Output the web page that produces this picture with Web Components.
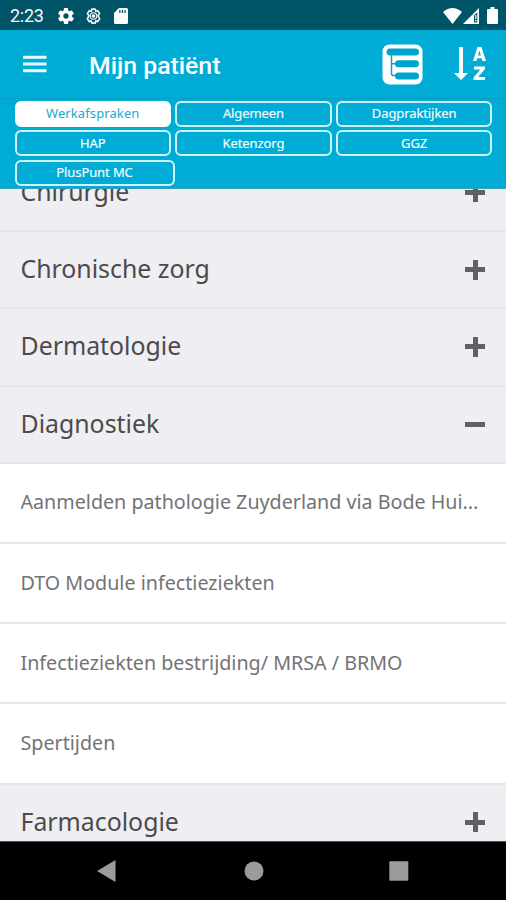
<!DOCTYPE html>
<html lang="nl">
<head>
<meta charset="utf-8">
<title>Mijn patiënt</title>
<style>
html, body { margin: 0; height: 100%; overflow: hidden; }
</style>
</head>
<body>
<patient-app></patient-app>
<script>
function define(name, markup) {
  const template = document.createElement('template');
  template.innerHTML = markup;
  customElements.define(name, class extends HTMLElement {
    constructor() {
      super();
      this.attachShadow({ mode: 'open' }).append(template.content.cloneNode(true));
    }
  });
}

define('status-bar', `
<style>
:host { display: flex; align-items: center; justify-content: space-between; height: 30px; box-sizing: border-box; padding: 1px 7px 0 10px; background: #005468; color: #f4fafb; font: 18px/28px Roboto, sans-serif; }
div { display: flex; align-items: center; }
svg { display: block; fill: #fff; }
.time { width: 48px; letter-spacing: -.3px; padding-top: 1px; }
</style>
<div>
  <span class="time">2:23</span>
  <svg width="16" height="16" viewBox="2 2 20 20"><path fill-rule="evenodd" d="M19.4 13c.1-.7.1-1.300 0-2l2.100-1.600c.2-.2.200-.4.1-.7l-2-3.400c-.1-.2-.4-.3-.6-.2l-2.500 1c-.5-.4-1.100-.7-1.700-1l-.4-2.600A.5.5 0 0 0 14 2h-4c-.3 0-.5.2-.5.400l-.4 2.700c-.6.2-1.200.6-1.700 1l-2.500-1c-.2-.1-.5 0-.6.200l-2 3.400c-.1.200-.1.500.1.700L4.500 11a9 9 0 0 0 0 2l-2.100 1.600c-.2.200-.2.400-.1.700l2 3.400c.1.200.4.300.6.200l2.500-1c.5.400 1.100.7 1.700 1l.4 2.700c0 .200.2.4.5.4h4c.3 0 .5-.2.500-.4l.4-2.700c.6-.2 1.200-.6 1.700-1l2.500 1c.2.1.5 0 .6-.2l2-3.400c.1-.2.1-.5-.1-.7zM12 15.300a3.300 3.300 0 1 1 0-6.600 3.300 3.300 0 0 1 0 6.600z"/></svg>
  <svg style="margin-left:11px" width="17" height="16" viewBox="1 1 22 22"><path fill="none" stroke="#e9f7f9" stroke-width="2.300" stroke-linejoin="round" d="M9.700 2.500h4.600l.8 3 2.800-.8 2.500 4-2.200 3 2.200 4-2.500 4-2.800-1-.8 3H9.700l-.8-3-2.800 1-2.500-4 2.200-4-2.200-3 2.500-4 2.800 1z"/><circle cx="12" cy="12" r="4.500" fill="none" stroke="#fff" stroke-width="1.500"/><circle cx="12" cy="12" r="2.500"/></svg>
  <svg style="margin-left:12px" width="14" height="16" viewBox="0 0 14 16"><path fill-rule="evenodd" d="M5 0h7.500Q14 0 14 1.500v13Q14 16 12.500 16h-11Q0 16 0 14.500V5zM5.200 2v3h1.300V2zm2.600 0v3h1.300V2zm2.600 0v3h1.300V2z"/></svg>
</div>
<div>
  <svg width="19" height="16" viewBox="0 0 19 16"><path d="M0 4Q9.500-4 19 4L9.500 16z"/></svg>
  <svg style="margin-left:1px" width="16" height="16" viewBox="0 0 16 16"><path d="M0 16L16 0v16z"/><path fill="#005468" d="M11 7.500l3.300-3.300v10.300H11z"/><path d="M12.200 7h1.200v4h-1.200zM12.200 12h1.200v1.500h-1.200z"/></svg>
  <svg style="margin:0 1px 0 8px" width="11" height="17" viewBox="0 0 11 17"><path d="M3.500 0h4v2H10q1 0 1 1v13q0 1-1 1H1q-1 0-1-1V3q0-1 1-1h2.500z"/></svg>
</div>`);

define('app-toolbar', `
<style>
:host { display: flex; align-items: center; height: 69px; box-sizing: border-box; padding: 0 20px 0 23px; background: #00acd5; border-bottom: 1px solid #069fc5; color: #fff; }
svg { display: block; }
h1 { flex: 1; margin: 3px 0 0 42px; font: 500 24.800px/32px Roboto, sans-serif; }
</style>
<svg width="24" height="18" viewBox="0 0 24 18" fill="#e8f9fc"><path d="M0 .8h23.500v3H0zM0 7.500h23.500v3H0zM0 14.200h23.500v3H0z"/></svg>
<h1>Mijn patiënt</h1>
<svg style="margin-right:30px" width="41" height="41" viewBox="0 0 41 41"><rect x=".5" y=".5" width="40" height="40" rx="7" fill="#fff"/><g fill="#00a3cb"><rect x="4.500" y="4.500" width="32.500" height="7" rx="3.500"/><rect x="13" y="16.300" width="24" height="7" rx="3.500"/><rect x="13" y="28.500" width="24" height="7" rx="3.500"/></g><path d="M9.500 11v18.500q0 2 2 2h3M9.500 19.800h5" fill="none" stroke="#00a3cb" stroke-width="1.500"/></svg>
<svg width="33" height="36" viewBox="0 0 33 36" fill="#fff"><path d="M6 1h4v26h5L8 34 1 27h5z"/><path fill-rule="evenodd" d="M24.500 1h4L33 15h-3.500l-.9-2.800h-4.300L23.400 15H20zM26.500 4.600L25.100 9.600h2.800z"/><path d="M21 20.500h11v2.600L25.200 31H32v3H20.500v-2.600l6.900-8H21z"/></svg>`);

define('filter-chip', `
<style>
:host { display: flex; align-items: center; justify-content: center; width: 156.500px; height: 26px; box-sizing: border-box; border: 2px solid #cff3fa; border-radius: 6px; color: #effcff; background: #00acd5; font: 13px/20px "Noto Sans", sans-serif; white-space: nowrap; }
:host([selected]) { background: #fff; border-color: #fff; color: #22a9cc; }
:host([wide]) { width: 160px; }
span { display: block; padding-bottom: 1px; }
:host(:not([selected])) span { letter-spacing: -.1px; -webkit-text-stroke: .2px currentColor; }
:host([selected]) span { letter-spacing: .1px; }
</style><span><slot></slot></span>`);

define('filter-bar', `
<style>
:host { display: flex; flex-wrap: wrap; align-content: flex-start; gap: 3.600px 4.200px; height: 89.500px; box-sizing: border-box; padding: 1.500px 10px 0 14.500px; background: #00acd5; border-bottom: 1px solid #3b9cb3; }
</style><slot></slot>`);

define('group-row', `
<style>
:host { display: flex; flex: none; align-items: center; justify-content: space-between; height: 77.300px; box-sizing: border-box; padding: 0 21px 0 20.500px; background: #efeef3; border-bottom: 2px solid #e6e6ea; color: #4b4b4d; font: 24.850px/34px "Noto Sans", sans-serif; }
span { padding-bottom: 3px; }
i { display: block; width: 20px; height: 20px; background: linear-gradient(#606062,#606062) center/20px 5px no-repeat, linear-gradient(#606062,#606062) center/5px 20px no-repeat; }
:host([open]) i { background-size: 20px 5px, 0 0; }
</style><span><slot></slot></span><i></i>`);

define('item-row', `
<style>
:host { display: flex; flex: none; align-items: center; height: 80.200px; box-sizing: border-box; padding: 0 20px 0 20.500px; background: #fff; border-bottom: 2px solid #e6e6e8; color: #737375; font: 19.700px/28px "Noto Sans", sans-serif; }
span { white-space: nowrap; overflow: hidden; text-overflow: ellipsis; padding-bottom: 1px; }
</style><span><slot></slot></span>`);

define('topic-list', `
<style>
:host { display: flex; flex: 1; min-height: 0; flex-direction: column; justify-content: flex-start; overflow: hidden; background: #efeef3; }
::slotted(:first-child) { margin-top: -33.800px; }
</style><slot></slot>`);

define('nav-bar', `
<style>
:host { display: flex; flex: none; justify-content: space-between; align-items: center; height: 59px; box-sizing: border-box; padding: 0 97px 0 96.500px; background: #000; border-top: 1px solid #555; }
svg { display: block; fill: #9b9b9b; }
</style>
<svg width="19" height="22" viewBox="0 0 19 22"><path d="M0 11L18.500 0v22z"/></svg>
<svg style="margin-left:3px" width="20" height="20" viewBox="0 0 20 20"><circle cx="10" cy="10" r="9.500"/></svg>
<svg width="20" height="20" viewBox="0 0 20 20"><rect x=".3" y=".3" width="19" height="19.400" rx="1"/></svg>`);

define('patient-app', `
<style>
:host { display: flex; flex-direction: column; width: 506px; height: 900px; overflow: hidden; }
status-bar, app-toolbar, filter-bar { flex: none; }
</style>
<status-bar></status-bar>
<app-toolbar></app-toolbar>
<filter-bar>
  <filter-chip selected>Werkafspraken</filter-chip><filter-chip>Algemeen</filter-chip><filter-chip>Dagpraktijken</filter-chip>
  <filter-chip>HAP</filter-chip><filter-chip>Ketenzorg</filter-chip><filter-chip>GGZ</filter-chip>
  <filter-chip wide>PlusPunt MC</filter-chip>
</filter-bar>
<topic-list>
  <group-row>Chirurgie</group-row>
  <group-row>Chronische zorg</group-row>
  <group-row>Dermatologie</group-row>
  <group-row open>Diagnostiek</group-row>
  <item-row>Aanmelden pathologie Zuyderland via Bode Hui...</item-row>
  <item-row>DTO Module infectieziekten</item-row>
  <item-row>Infectieziekten bestrijding/ MRSA / BRMO</item-row>
  <item-row>Spertijden</item-row>
  <group-row>Farmacologie</group-row>
</topic-list>
<nav-bar></nav-bar>`);
</script>
</body>
</html>
